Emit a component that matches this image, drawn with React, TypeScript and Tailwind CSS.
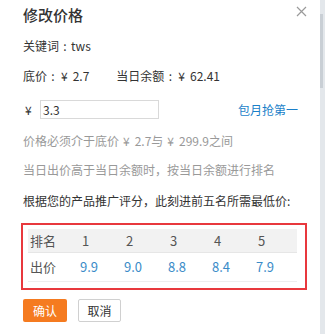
const ranks = ["1", "2", "3", "4", "5"];
const bids = ["9.9", "9.0", "8.8", "8.4", "7.9"];

// full-width colon with the dot centered, as the original font draws it
function Colon() {
  return <span className="inline-block w-[12px] text-center">:</span>;
}

// yen sign followed by a wide gap, then the amount
function Yen({ value }: { value: string }) {
  return (
    <>
      ¥<span className="ml-[5px]">{value}</span>
    </>
  );
}

export default function App() {
  return (
    <div
      lang="zh-CN"
      className="flex w-[325px] h-[334px] overflow-hidden bg-white font-['Noto_Sans_CJK_SC',sans-serif] text-[12px] text-[#333]"
    >
      {/* Dialog body */}
      <div className="relative flex-1 pl-[23px] pt-[5px]">
        <p className="h-[20px] leading-[20px] text-[15px] font-medium text-[#333]">修改价格</p>

        {/* Close */}
        <svg className="absolute left-[296px] top-[6px]" width="11" height="11" viewBox="0 0 11 11">
          <path d="M1 1L10 10M10 1L1 10" stroke="#9a9a9a" strokeWidth="1.2" />
        </svg>

        <p className="mt-[11px] h-[20px] leading-[20px]">
          关键词<Colon />tws
        </p>

        <p className="mt-[10px] h-[20px] leading-[20px]">
          底价<Colon />
          <span className="ml-[2px]"><Yen value="2.7" /></span>
          <span className="ml-[27px]">
            当日余额<Colon />
            <span className="ml-[2px]"><Yen value="62.41" /></span>
          </span>
        </p>

        {/* Price input */}
        <div className="mt-[14px] flex h-[19px] items-center pr-[22px]">
          <span className="ml-[2px] w-[15px]">¥</span>
          <input
            defaultValue="3.3"
            className="h-[19px] w-[119px] border border-[#d9d9d9] px-[2px] text-[12px] text-[#333] outline-none"
          />
          <span className="ml-auto text-[#1a7fc9]">包月抢第一</span>
        </div>

        <p className="mt-[12px] h-[20px] leading-[20px] text-[#999]">
          价格必须介于底价<span className="ml-[4px]"><Yen value="2.7" /></span>与
          <span className="ml-[4px]"><Yen value="299.9" /></span>之间
        </p>
        <p className="mt-[9px] h-[20px] leading-[20px] text-[#999]">当日出价高于当日余额时，按当日余额进行排名</p>
        <p className="mt-[11px] h-[20px] leading-[20px]">根据您的产品推广评分，此刻进前五名所需最低价:</p>

        {/* Top five table */}
        <div className="mt-[12px] -ml-[2px] h-[67px] w-[286px] border-2 border-[#e8383d] pl-[5px] pt-[4px]">
          <div className="grid h-[24px] w-[269px] grid-cols-[52px_44px_44px_44px_44px_41px] items-center border-b border-[#e6e6e6] bg-[#f2f2f2] pl-[2px] text-[13px] text-[#555]">
            <span>排名</span>
            {ranks.map((r) => (
              <span key={r}>{r}</span>
            ))}
          </div>
          <div className="grid h-[29px] w-[269px] grid-cols-[52px_44px_44px_44px_44px_41px] items-center border-b border-[#eeeeee] pl-[2px] text-[13px]">
            <span className="text-[#555]">出价</span>
            {bids.map((b) => (
              <span key={b} className="-ml-[2px] text-[#3a8bc8]">
                {b}
              </span>
            ))}
          </div>
        </div>

        {/* Actions */}
        <div className="mt-[9px] flex gap-[11px]">
          <button className="h-[23px] w-[44px] rounded-[2px] bg-[#f57b20] text-[12px] text-white">确认</button>
          <button className="h-[23px] w-[43px] rounded-[2px] border border-[#d0d0d0] bg-white text-[12px] text-[#333]">取消</button>
        </div>
      </div>

      {/* Scrollbar */}
      <div className="flex w-[5px] flex-col bg-[#e3e7eb] pt-[14px]">
        <div className="h-[74px] w-[3px] bg-[#c9cfd5]" />
      </div>
    </div>
  );
}
